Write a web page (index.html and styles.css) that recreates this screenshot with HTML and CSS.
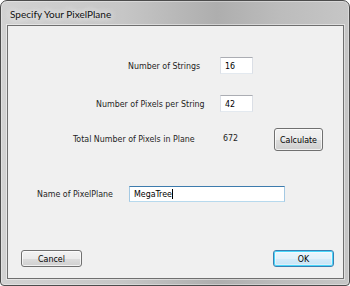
FILE: index.html
```html
<!DOCTYPE html>
<html>
<head>
<meta charset="utf-8">
<link rel="stylesheet" href="styles.css">
</head>
<body>
<div class="window">
  <div class="titlebar"><span class="title">Specify Your PixelPlane</span></div>
  <div class="client">
    <div class="row row1">
      <span class="label">Number of Strings</span>
      <div class="field small"><span>16</span></div>
    </div>
    <div class="row row2">
      <span class="label">Number of Pixels per String</span>
      <div class="field small"><span>42</span></div>
    </div>
    <div class="row row3">
      <span class="label">Total Number of Pixels in Plane</span>
      <span class="value">672</span>
      <div class="btn calc">Calculate</div>
    </div>
    <div class="row row4">
      <span class="label">Name of PixelPlane</span>
      <div class="field wide focus"><span>MegaTree</span><i class="caret"></i></div>
    </div>
    <div class="row row5">
      <div class="btn cancel">Cancel</div>
      <div class="btn ok">OK</div>
    </div>
  </div>
</div>
</body>
</html>
```

FILE: styles.css
```css
html, body {
  margin: 0;
  padding: 0;
  background: #ffffff;
}
body {
  font-family: "DejaVu Sans Condensed", "DejaVu Sans", sans-serif;
  font-size: 8.8px;
  color: #1e1e1e;
}
.window {
  width: 350px;
  height: 286px;
  box-sizing: border-box;
  border: 1px solid #4c4c4c;
  border-radius: 7px 7px 4px 4px;
  background: linear-gradient(90deg, #d2d2d2 0%, #c6c6c6 35%, #aeaeae 62%, #bcbcbc 80%, #c6c6c6 100%);
  padding: 0 5px 6px 6px;
  display: flex;
  flex-direction: column;
  box-shadow: inset 0 0 0 1px rgba(255,255,255,0.35);
}
.titlebar {
  height: 24px;
  display: flex;
  align-items: center;
  padding-left: 3px;
}
.title {
  font-family: "Lato", "Open Sans", sans-serif;
  font-size: 10px;
  color: #111;
  text-shadow: 0 0 6px #f4f4f4, 0 0 8px #eeeeee;
  margin-top: 1px;
}
.client {
  flex: 1;
  border: 1px solid #6f6f6f;
  background: #f0f0f0;
  box-shadow: 0 0 0 1px rgba(255,255,255,0.45);
  display: flex;
  flex-direction: column;
}
.row {
  display: flex;
  align-items: center;
}
.label { white-space: nowrap; }
.row1 { margin-top: 31px; height: 17px; }
.row1 .label { margin-left: 120px; width: 92px; }
.row2 { margin-top: 21px; height: 17px; }
.row2 .label { margin-left: 88px; width: 124px; }
.row3 { margin-top: 16px; height: 23px; }
.row3 .label { margin-left: 65px; width: 150px; margin-top: -2px; }
.row3 .value { width: 51px; margin-top: -4px; }
.row4 { margin-top: 35px; height: 16px; }
.row4 .label { margin-left: 29px; width: 92px; }
.row5 { margin-top: 48px; height: 17px; justify-content: space-between; padding: 0 9px 0 13px; }

.field {
  box-sizing: border-box;
  height: 100%;
  background: #ffffff;
  border: 1px solid #dbdfe6;
  border-top-color: #abadb3;
  border-bottom-color: #e3e9ef;
  display: flex;
  align-items: center;
  padding-left: 4px;
  color: #000;
}
.field.small { width: 33px; }
.field.wide { width: 156px; }
.field.focus {
  border-color: #a4c9e3;
  border-top-color: #3d7bad;
  border-bottom-color: #b7d9ed;
}
.caret {
  display: inline-block;
  width: 1px;
  height: 10px;
  background: #000;
}
.btn {
  box-sizing: border-box;
  border: 1px solid #707070;
  border-radius: 3px;
  background: linear-gradient(180deg, #f2f2f2 0%, #ebebeb 50%, #dddddd 51%, #cfcfcf 100%);
  box-shadow: inset 0 0 0 1px rgba(255,255,255,0.7);
  display: flex;
  align-items: center;
  justify-content: center;
  color: #000;
  height: 100%;
}
.calc { width: 49px; }
.cancel { width: 61px; }
.ok {
  width: 61px;
  border-color: #3c7fb1;
  box-shadow: inset 0 0 0 1px #48d7fb, inset 0 0 0 2px rgba(255,255,255,0.4);
  background: linear-gradient(180deg, #eaf6fd 0%, #e3f1fa 50%, #d6ecf9 51%, #c5e3f5 100%);
}
```
